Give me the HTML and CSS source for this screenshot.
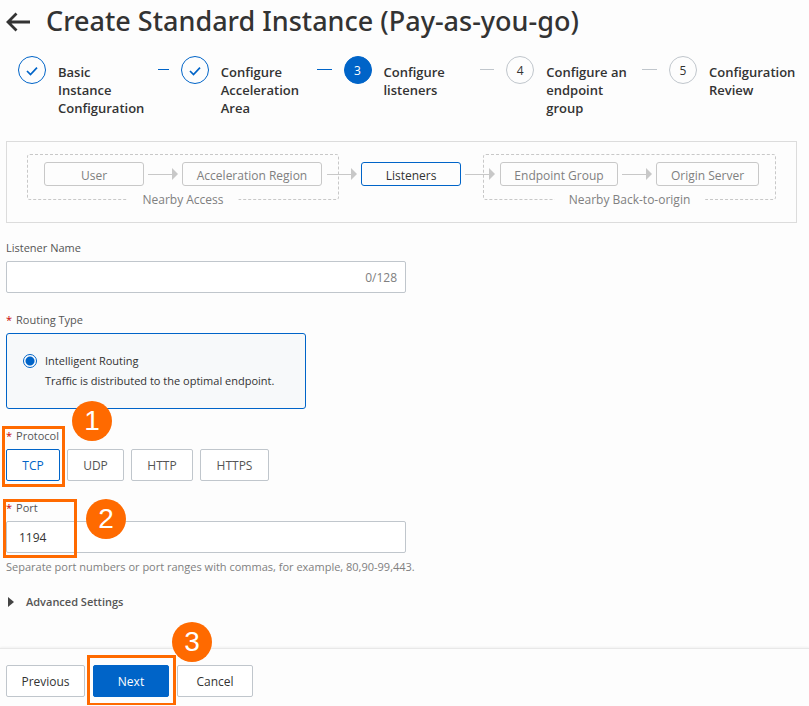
FILE: index.html
```
<!DOCTYPE html>
<html lang="en">

<head>
    <meta charset="UTF-8">
    <meta name="viewport" content="width=device-width, initial-scale=1.0">
    <title>Create Standard Instance</title>
    <link rel="stylesheet" href="styles.css">
</head>

<body>
    <header class="page-header">
        <a href="#" class="back" aria-label="Back">
            <svg width="26" height="20" viewBox="0 0 26 20" fill="none" stroke="#333" stroke-width="2.800">
                <path d="M3 10H25M11.500 1.500L3 10L11.500 18.500" />
            </svg>
        </a>
        <h1>Create Standard Instance (Pay-as-you-go)</h1>
    </header>

    <ol class="steps">
        <li class="step done">
            <span class="step-icon">
                <svg width="12" height="10" viewBox="0 0 12 10" fill="none" stroke="#0064c8" stroke-width="1.700">
                    <path d="M1 5L4.500 8.500L11 1.700" />
                </svg>
            </span>
            <span class="step-title">Basic Instance Configuration</span>
            <span class="step-line"></span>
        </li>
        <li class="step done">
            <span class="step-icon">
                <svg width="12" height="10" viewBox="0 0 12 10" fill="none" stroke="#0064c8" stroke-width="1.700">
                    <path d="M1 5L4.500 8.500L11 1.700" />
                </svg>
            </span>
            <span class="step-title">Configure Acceleration Area</span>
            <span class="step-line"></span>
        </li>
        <li class="step current">
            <span class="step-icon">3</span>
            <span class="step-title">Configure listeners</span>
            <span class="step-line"></span>
        </li>
        <li class="step">
            <span class="step-icon">4</span>
            <span class="step-title">Configure an endpoint group</span>
            <span class="step-line"></span>
        </li>
        <li class="step">
            <span class="step-icon">5</span>
            <span class="step-title">Configuration Review</span>
        </li>
    </ol>

    <main>
        <section class="flow">
            <div class="flow-group">
                <span class="node node-user">User</span>
                <span class="arrow"></span>
                <span class="node node-region">Acceleration Region</span>
                <span class="flow-label">Nearby Access</span>
            </div>
            <span class="arrow arrow-out"></span>
            <span class="node node-active">Listeners</span>
            <span class="arrow arrow-in"></span>
            <div class="flow-group">
                <span class="node node-endpoint">Endpoint Group</span>
                <span class="arrow"></span>
                <span class="node node-origin">Origin Server</span>
                <span class="flow-label">Nearby Back-to-origin</span>
            </div>
        </section>

        <form id="listenerForm">
            <div class="field">
                <label class="field-label" for="listenerName">Listener Name</label>
                <div class="input-box">
                    <input type="text" id="listenerName" name="listenerName" maxlength="128">
                    <span class="counter">0/128</span>
                </div>
            </div>

            <div class="field">
                <span class="field-label required">Routing Type</span>
                <label class="routing-card" for="intelligent">
                    <input type="radio" id="intelligent" name="routing" checked>
                    <span>Intelligent Routing<br>Traffic is distributed to the optimal endpoint.</span>
                </label>
            </div>

            <div class="field">
                <span class="field-label required">Protocol</span>
                <div class="protocols">
                    <button type="button" class="btn protocol tcp selected">TCP</button>
                    <button type="button" class="btn protocol udp">UDP</button>
                    <button type="button" class="btn protocol http">HTTP</button>
                    <button type="button" class="btn protocol https">HTTPS</button>
                </div>
                <span class="mark mark-protocol"></span>
                <span class="badge badge-protocol">1</span>
            </div>

            <div class="field">
                <label class="field-label required" for="port">Port</label>
                <div class="input-box">
                    <input type="text" id="port" name="port" value="1194">
                </div>
                <p class="help">Separate port numbers or port ranges with commas, for example, 80,90-99,443.</p>
                <span class="mark mark-port"></span>
                <span class="badge badge-port">2</span>
            </div>

            <button type="button" class="advanced">
                <svg width="6" height="10" viewBox="0 0 6 10" fill="#444">
                    <path d="M0 0L6 5L0 10Z" />
                </svg>
                Advanced Settings
            </button>
        </form>
    </main>

    <footer class="actions">
        <button type="button" class="btn previous">Previous</button>
        <div class="next-wrap">
            <button type="submit" form="listenerForm" class="btn next">Next</button>
            <span class="mark mark-next"></span>
            <span class="badge badge-next">3</span>
        </div>
        <button type="button" class="btn cancel">Cancel</button>
    </footer>
</body>

</html>
```
FILE: styles.css
```
* {
    margin: 0;
    padding: 0;
    box-sizing: border-box;
}

body {
    font-family: "Segoe UI", "Open Sans", "Noto Sans", sans-serif;
    font-size: 12px;
    line-height: 18px;
    color: #333;
    background: #fdfdfd;
    overflow-x: hidden;
}

button,
input {
    font: inherit;
    color: inherit;
}

.page-header {
    display: flex;
    align-items: center;
    gap: 15px;
    height: 44px;
    padding: 0 5px;
}

.back {
    display: flex;
}

h1 {
    font-family: "Segoe UI", "Noto Sans", sans-serif;
    font-size: 27px;
    font-weight: 500;
    line-height: 36px;
    padding-bottom: 2px;
    white-space: nowrap;
}

/* Steps */
.steps {
    display: flex;
    list-style: none;
    height: 97px;
    padding: 12px 12px 0 18px;
}

.step {
    display: flex;
    flex: 1;
    gap: 12px;
    padding-right: 12px;
}

.step:last-child {
    flex: none;
    padding-right: 0;
}

.step-icon {
    display: flex;
    flex: none;
    align-items: center;
    justify-content: center;
    width: 28px;
    height: 28px;
    padding-top: 1px;
    border: 1px solid #c0c6cc;
    border-radius: 50%;
}

.done .step-icon {
    border-color: #0064c8;
}

.current .step-icon {
    border-color: #0064c8;
    background: #0064c8;
    color: #fff;
}

.step-title {
    flex: none;
    width: 84px;
    padding-top: 7px;
    font-size: 13px;
    font-weight: 600;
}

.step:first-child .step-title,
.step:last-child .step-title {
    width: 88px;
}

.step-line {
    flex: 1;
    height: 1px;
    margin-top: 13px;
    background: #c0c6cc;
}

.done .step-line {
    background: #0064c8;
}

/* Traffic path */
.flow {
    display: flex;
    justify-content: center;
    margin: 0 12px 16px 6px;
    padding: 12px 0 22px;
    border: 1px solid #dcdcdc;
    color: #808080;
}

.flow-group {
    position: relative;
    display: flex;
    padding: 7px 16px 13px;
    border: 1px dashed #c8c8c8;
    border-radius: 3px;
}

.flow-label {
    position: absolute;
    left: 50%;
    bottom: -1px;
    padding: 0 15px;
    background: #fdfdfd;
    white-space: nowrap;
    transform: translate(-50%, 50%);
}

.node {
    height: 24px;
    border: 1px solid #c8c8c8;
    border-radius: 3px;
    line-height: 25px;
    text-align: center;
    white-space: nowrap;
}

.node-user {
    width: 100px;
}

.node-region {
    width: 140px;
}

.node-endpoint {
    width: 118px;
}

.node-origin {
    width: 103px;
}

.node-active {
    width: 100px;
    margin-top: 8px;
    border-color: #0064c8;
    color: #333;
}

.arrow {
    display: flex;
    align-items: center;
    width: 30px;
    height: 24px;
    margin: 0 4px;
    z-index: 1;
}

.arrow::before {
    content: "";
    flex: 1;
    height: 1px;
    background: #c8c8c8;
}

.arrow::after {
    content: "";
    border: 6px solid transparent;
    border-left: 6px solid #c8c8c8;
    border-right: 0;
}

.arrow-out {
    margin: 8px 4px 0 -12px;
}

.arrow-in {
    margin: 8px -12px 0 4px;
}

/* Form */
form {
    padding: 0 6px;
}

.field {
    position: relative;
    margin-bottom: 18px;
}

.field-label {
    display: block;
    width: fit-content;
    margin-bottom: 4px;
    color: #555;
    font-size: 11px;
}

.required::before {
    content: "*";
    margin-right: 4px;
    color: #c80000;
}

.input-box {
    display: flex;
    align-items: center;
    max-width: 400px;
    height: 32px;
    padding: 1px 8px 0 12px;
    border: 1px solid #c0c6cc;
    border-radius: 2px;
    background: #fff;
}

.input-box input {
    flex: 1;
    min-width: 0;
    border: 0;
    outline: none;
    background: none;
}

.counter {
    color: #808080;
}

.routing-card {
    display: flex;
    gap: 8px;
    max-width: 300px;
    height: 76px;
    padding: 17px 16px;
    border: 1px solid #0064c8;
    border-radius: 3px;
    background: #f7f9fa;
    font-size: 11px;
    line-height: 20px;
    white-space: nowrap;
}

.routing-card input {
    appearance: none;
    flex: none;
    width: 14px;
    height: 14px;
    margin-top: 3px;
    border: 1px solid #0064c8;
    border-radius: 50%;
    background: radial-gradient(circle, #0064c8 4px, #fff 5px);
}

.protocols {
    display: flex;
    gap: 7px;
}

.btn {
    height: 32px;
    padding-top: 1px;
    border: 1px solid #c0c6cc;
    border-radius: 2px;
    background: #fff;
    cursor: pointer;
}

.protocol {
    color: #555;
}

.tcp {
    width: 54px;
}

.udp {
    width: 57px;
}

.http {
    width: 62px;
}

.https {
    width: 69px;
}

.selected {
    border-color: #0064c8;
    color: #0064c8;
}

.help {
    margin-top: 5px;
    color: #808080;
    font-size: 11px;
}

.advanced {
    display: flex;
    align-items: center;
    gap: 12px;
    padding: 0 2px;
    border: 0;
    background: none;
    color: #555;
    font-size: 11px;
    font-weight: 600;
    line-height: 16px;
    cursor: pointer;
}

/* Footer */
.actions {
    display: flex;
    gap: 8px;
    margin-top: 38px;
    padding: 16px 6px 8px;
    border-top: 1px solid #e8e8e8;
    box-shadow: 0 -1px 2px rgba(0, 0, 0, 0.05);
}

.next-wrap {
    position: relative;
}

.previous {
    width: 79px;
}

.next,
.cancel {
    width: 76px;
}

.next {
    border-color: #0064c8;
    background: #0064c8;
    color: #fff;
    font-weight: 500;
}

/* Numbered callouts */
.mark {
    position: absolute;
    border: 3px solid #ff6a00;
    pointer-events: none;
}

.badge {
    position: absolute;
    z-index: 2;
    width: 40px;
    height: 40px;
    border-radius: 50%;
    background: #ff6a00;
    color: #fff;
    font: 28px/40px "Liberation Sans", Arial, sans-serif;
    text-align: center;
}

.mark-protocol {
    top: -1px;
    left: -4px;
    width: 63px;
    height: 61px;
}

.badge-protocol {
    top: -26px;
    left: 66px;
}

.mark-port {
    top: 0;
    left: -3px;
    width: 74px;
    height: 59px;
}

.badge-port {
    top: 0;
    left: 80px;
}

.mark-next {
    top: -10px;
    left: -6px;
    width: 89px;
    height: 51px;
}

.badge-next {
    top: -43px;
    left: 79px;
}
```
